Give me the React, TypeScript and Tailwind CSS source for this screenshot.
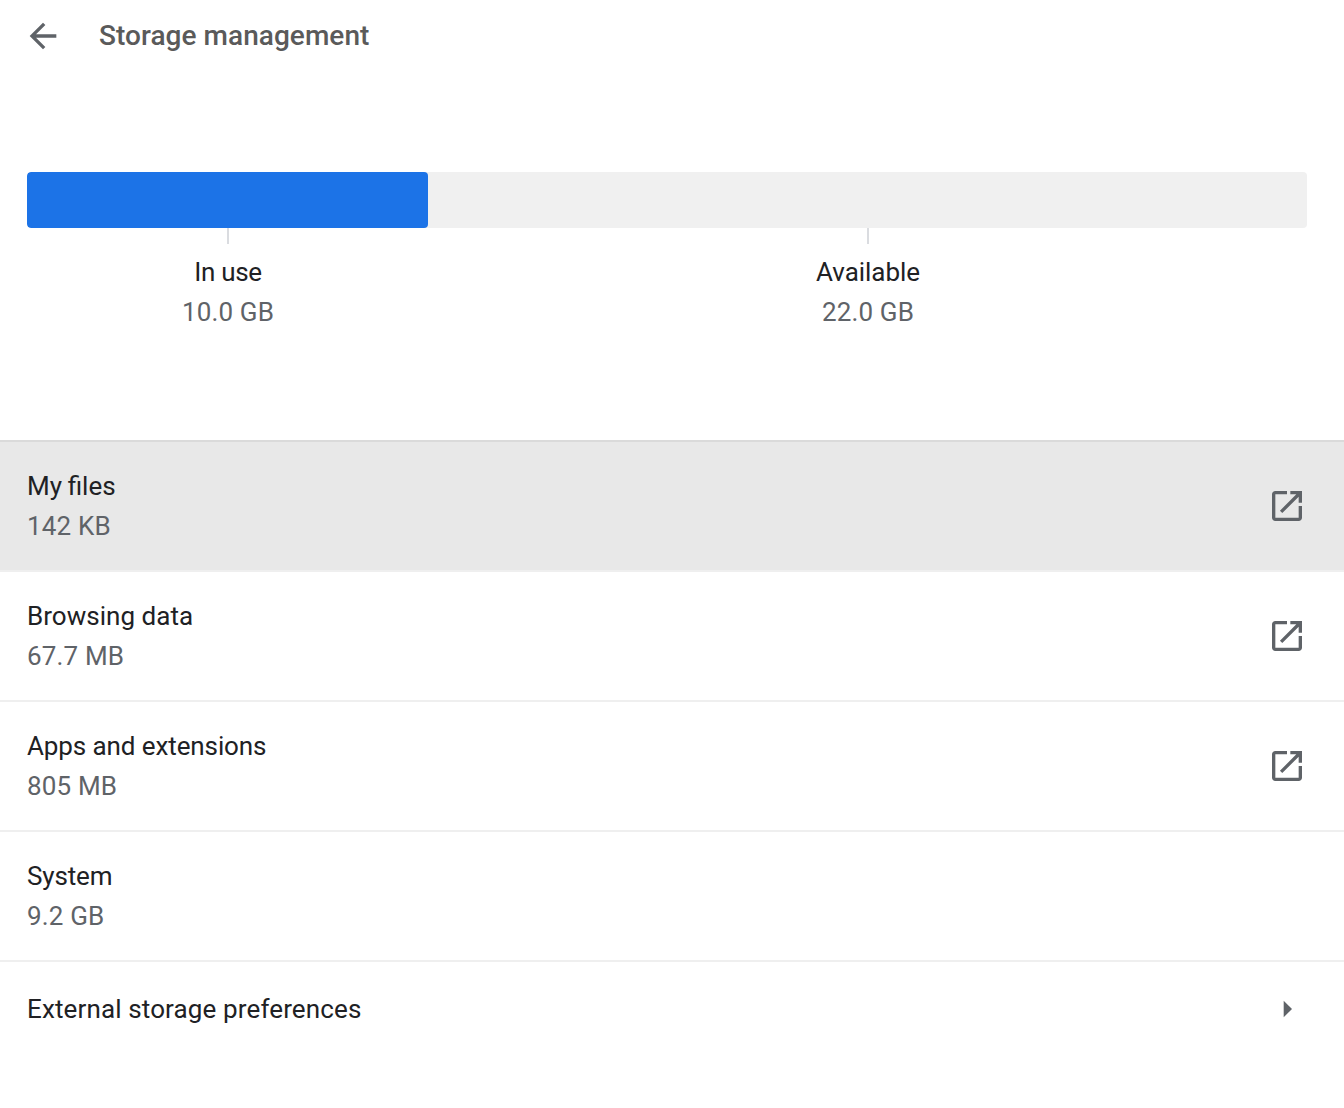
import React from 'react';

interface StorageItem {
  label: string;
  size: string;
  link: boolean;
  spacing: string;
  active?: boolean;
}

// letter-spacing turns the "fi" ligature off, so "My files" only gets word-spacing
const items: StorageItem[] = [
  { label: 'My files', size: '142 KB', link: true, spacing: '[word-spacing:-0.8px]', active: true },
  { label: 'Browsing data', size: '67.7 MB', link: true, spacing: 'tracking-[0.03px]' },
  { label: 'Apps and extensions', size: '805 MB', link: true, spacing: 'tracking-[-0.1px]' },
  { label: 'System', size: '9.2 GB', link: false, spacing: 'tracking-[-0.15px]' },
];

const Icon = ({ d }: { d: string }) => (
  <svg viewBox="0 0 24 24" className="size-10 shrink-0 fill-[#5f6368]">
    <path d={d} />
  </svg>
);

const BACK = 'M20 11H7.83l5.59-5.59L12 4l-8 8 8 8 1.41-1.41L7.83 13H20v-2z';
const OPEN = 'M19 19H5V5h7V3H5c-1.11 0-2 .9-2 2v14c0 1.1.89 2 2 2h14c1.1 0 2-.9 2-2v-7h-2v7zM14 3v2h3.59l-9.83 9.83 1.41 1.41L19 6.41V10h2V3h-7z';
const ARROW = 'M10 7l5 5-5 5z';

// tick under the bar plus its caption
const BarLabel = ({ label, size, spacing }: { label: string; size: string; spacing: string }) => (
  <div className="flex flex-col items-center">
    <div className="mb-2 h-4 w-0.5 bg-[#dadce0]" />
    <span className={spacing}>{label}</span>
    <span className="tracking-[0.16px] text-[#5f6368]">{size}</span>
  </div>
);

export default function App() {
  return (
    <div className="min-h-screen bg-white font-['Roboto',sans-serif] text-[26px] leading-10 text-[#202124]">
      <header className="flex h-[72px] items-center pl-[23px]">
        <button aria-label="Back">
          <Icon d={BACK} />
        </button>
        <h1 className="ml-9 text-[28px] font-medium tracking-[0.05px] text-[#5a5a5a]">Storage management</h1>
      </header>

      <section className="h-[368px] px-[27px] pt-[100px]">
        <div className="mr-[10px] h-14 overflow-hidden rounded bg-[#f0f0f0]">
          <div className="h-full w-[401px] rounded bg-[#1c73e7]" />
        </div>
        <div className="mr-[10px] grid grid-cols-[402px_1fr]">
          <BarLabel label="In use" size="10.0 GB" spacing="tracking-[-0.3px]" />
          <BarLabel label="Available" size="22.0 GB" spacing="tracking-[-0.06px]" />
        </div>
      </section>

      <main className="border-t-2 border-[#dadada]">
        {items.map((item) => (
          <div
            key={item.label}
            className={`flex h-[130px] items-center justify-between border-b-2 border-[#efefef] pr-[37px] pl-[27px] ${item.active ? 'bg-[#e8e8e8]' : ''}`}
          >
            <div>
              <div className={item.spacing}>{item.label}</div>
              <div className="tracking-[0.16px] text-[#5f6368]">{item.size}</div>
            </div>
            {item.link && <Icon d={OPEN} />}
          </div>
        ))}
        <div className="flex h-[94px] items-center justify-between pr-[37px] pl-[27px]">
          <span className="tracking-[0.13px]">External storage preferences</span>
          <Icon d={ARROW} />
        </div>
      </main>
    </div>
  );
}
